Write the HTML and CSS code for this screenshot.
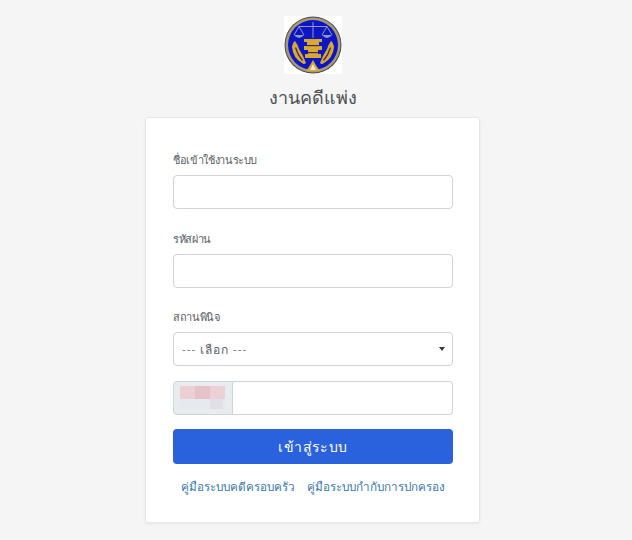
FILE: index.html
```html
<!DOCTYPE html>
<html lang="th">
<head>
<meta charset="utf-8">
<title>งานคดีแพ่ง</title>
<link rel="stylesheet" href="styles.css">
</head>
<body>
<main class="page">
  <svg class="logo" viewBox="0 0 58 58" width="58" height="58" aria-hidden="true">
    <defs><filter id="soft"><feGaussianBlur stdDeviation="0.35"/></filter></defs>
    <rect width="58" height="58" fill="#fff"/>
    <g filter="url(#soft)">
      <circle cx="29" cy="29" r="28.5" fill="#4a4a58"/>
      <circle cx="29" cy="29" r="27.5" fill="#a89a72"/>
      <circle cx="29" cy="29" r="25" fill="#0c18c4"/>
      <g fill="none" stroke="#b9b7c4" stroke-width="0.8">
        <path d="M29 6V22M15 10.5H43M15 10.5L10 19M15 10.5L20 19M43 10.5L38 19M43 10.5L48 19"/>
      </g>
      <path d="M10 19H20Q15 25 10 19ZM38 19H48Q43 25 38 19Z" fill="#9b9ab0"/>
      <g fill="#d9a832">
        <path d="M20 23H38V26H35V30H38V34H34V38H37V42H21V38H24V34H20V30H23V26H20Z"/>
        <path d="M8 31Q9 26 11 25Q14 29 15 33Q19 39 22 47Q20 49 18 47Q9 42 8 31Z"/>
        <path d="M50 31Q49 26 47 25Q44 29 43 33Q39 39 36 47Q38 49 40 47Q49 42 50 31Z"/>
        <path d="M22 55Q26 50 29 44Q32 50 36 55Z"/>
      </g>
      <path d="M26 54Q28 51 29 48Q30 51 32 54Z" fill="#f3ecd8"/>
      <g fill="#3a2f5c">
        <rect x="23" y="29" width="12" height="1.2"/>
        <rect x="24" y="36" width="10" height="1.2"/>
        <path d="M12 31Q14 38 19 44L18 45Q13 39 11 32ZM46 31Q44 38 39 44L40 45Q45 39 47 32Z"/>
      </g>
    </g>
  </svg>
  <h1 class="title">งานคดีแพ่ง</h1>
  <form class="card">
    <div class="field field-first">
      <label class="label">ชื่อเข้าใช้งานระบบ</label>
      <input class="control" type="text">
    </div>
    <div class="field">
      <label class="label">รหัสผ่าน</label>
      <input class="control" type="password">
    </div>
    <div class="field">
      <label class="label">สถานพินิจ</label>
      <div class="control select"><span>--- เลือก ---</span><i class="caret"></i></div>
    </div>
    <div class="captcha">
      <div class="captcha-code">
        <svg viewBox="0 0 9 5" width="45" height="25" aria-hidden="true" shape-rendering="crispEdges">
          <rect x="0" y="0" width="3" height="2.6" fill="#eccfd3"/>
          <rect x="3" y="0" width="3" height="2.6" fill="#e6c2c8"/>
          <rect x="6" y="0" width="3" height="2.6" fill="#ebd0d5"/>
          <rect x="0" y="2.6" width="9" height="2" fill="#e8e9ee"/>
          <rect x="6" y="2.6" width="2.6" height="2" fill="#e2dfe6"/>
        </svg>
      </div>
      <input class="captcha-input" type="text">
    </div>
    <button class="submit" type="button">เข้าสู่ระบบ</button>
    <nav class="links">
      <a href="#">คู่มือระบบคดีครอบครัว</a>
      <a href="#">คู่มือระบบกำกับการปกครอง</a>
    </nav>
  </form>
</main>
</body>
</html>
```
FILE: styles.css
```css
* { box-sizing: border-box; }
html, body { margin: 0; height: 100%; }
body {
  background: #f5f5f5;
  color: #50565c;
  font-family: "Noto Sans", "Open Sans", "DejaVu Sans", sans-serif;
  font-weight: 300;
  overflow: hidden;
}
.page {
  display: flex;
  flex-direction: column;
  align-items: center;
  padding: 16px 6px 0 0;
}
.logo { display: block; }
.title {
  margin: 11px 0 0;
  height: 32px;
  font-size: 18px;
  line-height: 24px;
  font-weight: 300;
  color: #4a4f54;
}
.card {
  width: 335px;
  height: 406px;
  margin-right: 1px;
  padding: 33px 27px 0;
  background: #fff;
  border: 1px solid #e6e7e8;
  border-radius: 3px;
  box-shadow: 0 1px 3px rgba(0, 0, 0, .06);
}
.field { display: flex; flex-direction: column; margin-bottom: 20px; }
.field-first { margin-bottom: 21px; }
.label {
  height: 24px;
  padding-top: 1px;
  font-size: 11px;
  line-height: 16px;
  letter-spacing: -.35px;
  color: #5a6066;
}
.control {
  width: 280px;
  height: 34px;
  background: #fff;
  border: 1px solid #ced4da;
  border-radius: 4px;
  padding: 0 8px;
}
.select {
  display: flex;
  align-items: center;
  justify-content: space-between;
  font-size: 12px;
  letter-spacing: .9px;
  color: #5a6066;
  padding-right: 7px;
}
.caret {
  width: 0;
  height: 0;
  border-left: 3.5px solid transparent;
  border-right: 3.5px solid transparent;
  border-top: 4px solid #343a40;
}
.captcha {
  display: flex;
  width: 280px;
  height: 34px;
  margin-top: -5px;
  margin-bottom: 14px;
}
.captcha-code {
  width: 60px;
  flex: none;
  padding: 4px 0 0 6px;
  background: #e9ecef;
  border: 1px solid #ced4da;
  border-radius: 4px 0 0 4px;
}
.captcha-code svg { display: block; }
.captcha-input {
  flex: 1;
  min-width: 0;
  border: 1px solid #ced4da;
  border-left: 0;
  border-radius: 0 4px 4px 0;
}
.submit {
  display: block;
  width: 280px;
  height: 35px;
  padding: 0;
  border: 0;
  border-radius: 4px;
  background: #2962dc;
  color: #fff;
  font: inherit;
  font-size: 14px;
  letter-spacing: .4px;
}
.links {
  display: flex;
  justify-content: center;
  gap: 12px;
  margin-top: 13px;
  font-size: 11.7px;
  line-height: 18px;
}
.links a { color: #3a78b0; text-decoration: none; white-space: nowrap; }
```
